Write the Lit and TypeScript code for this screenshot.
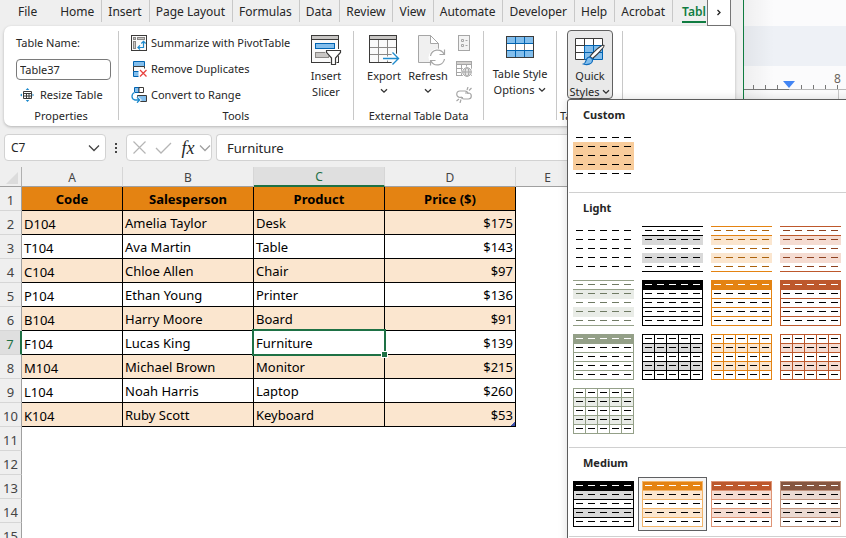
import { LitElement, html, svg, css, nothing } from "lit";
import { customElement, property } from "lit/decorators.js";
import { classMap } from "lit/directives/class-map.js";

interface Style {
  name: string;
  line?: string;
  dash: string;
  head?: string;
  band?: string;
  kind: "plain" | "custom" | "bands" | "rows" | "grid" | "medium";
  selected?: boolean;
}

@customElement("style-thumb")
class StyleThumb extends LitElement {
  @property({ attribute: false }) look!: Style;

  static styles = css`
    :host { display: block; }
    svg { display: block; }
    button { display: block; padding: 0; border: 0; background: none; }
    .selected { outline: 1px solid #5f6062; outline-offset: 3px; box-shadow: 0 0 0 3px #f5f5f5; }
  `;

  render() {
    const s = this.look;
    const steps = [0, 1, 2, 3, 4];
    const edges = [0, 1, 2, 3, 4, 5];
    const bar = (x: number, y: number, w: number, h: number, fill: string) =>
      svg`<rect x=${x} y=${y} width=${w} height=${h} fill=${fill}></rect>`;
    const line = s.line ?? "none";
    const lined = s.kind === "rows" || s.kind === "grid" || s.kind === "medium";
    return html`
      <button class=${classMap({ selected: !!s.selected })} aria-label=${s.name}>
        <svg width="61" height="46" viewBox="0 0 61 46" shape-rendering="crispEdges" aria-hidden="true">
          ${lined ? bar(0, 0, 61, 46, "#fff") : nothing}
          ${s.kind === "custom" ? bar(0, 9, 61, 28, s.band!) : nothing}
          ${s.band && s.kind !== "custom" ? [bar(0, 10, 61, 9, s.band), bar(0, s.kind === "bands" ? 27 : 28, 61, s.kind === "bands" ? 10 : 9, s.band)] : nothing}
          ${s.kind === "bands" ? [0, 9, 45].map((y) => bar(0, y, 61, 1, line)) : nothing}
          ${lined ? edges.map((i) => bar(0, i * 9, 61, 1, line)) : nothing}
          ${lined ? [bar(0, 0, 1, 46, line), bar(60, 0, 1, 46, line)] : nothing}
          ${s.kind === "grid" ? edges.map((i) => bar(i * 12, 0, 1, 46, line)) : nothing}
          ${s.kind === "rows" ? bar(0, 0, 61, 10, s.head!) : nothing}
          ${s.kind === "medium" ? bar(1, 1, 59, 8, s.head!) : nothing}
          ${steps.map((r) => steps.map((c) => bar(3 + c * 12, 4 + r * 9, 7, 1, r === 0 && s.head ? "#fff" : s.dash)))}
        </svg>
      </button>`;
  }
}

const K = "#000000";
const CUSTOM: Style[] = [{ name: "Custom style", kind: "custom", dash: K, band: "#f8cc9b" }];
const LIGHT: Style[] = [
  { name: "None", kind: "plain", dash: K },
  { name: "Light 1", kind: "bands", line: K, dash: K, band: "#d9d9d9" },
  { name: "Light 2", kind: "bands", line: "#e48312", dash: "#ab620d", band: "#fbe6cf" },
  { name: "Light 3", kind: "bands", line: "#bd582c", dash: "#8e4221", band: "#f5dcd2" },
  { name: "Light 6", kind: "bands", line: "#94a088", dash: "#6f7a63", band: "#e9ece7" },
  { name: "Light 8", kind: "rows", line: K, dash: K, head: K },
  { name: "Light 9", kind: "rows", line: "#e48312", dash: K, head: "#e48312" },
  { name: "Light 10", kind: "rows", line: "#bd582c", dash: K, head: "#bd582c" },
  { name: "Light 13", kind: "rows", line: "#94a088", dash: K, head: "#94a088" },
  { name: "Light 15", kind: "grid", line: K, dash: K, band: "#d9d9d9" },
  { name: "Light 16", kind: "grid", line: "#e48312", dash: K, band: "#fbe6cf" },
  { name: "Light 17", kind: "grid", line: "#bd582c", dash: K, band: "#f5dcd2" },
  { name: "Light 20", kind: "grid", line: "#94a088", dash: K, band: "#e9ece7" },
];
const MEDIUM: Style[] = [
  { name: "Medium 1", kind: "medium", line: K, dash: K, head: K, band: "#d9d9d9" },
  { name: "Medium 2", kind: "medium", line: "#f2b469", dash: K, head: "#e48312", band: "#fbe6cf", selected: true },
  { name: "Medium 3", kind: "medium", line: "#de9475", dash: K, head: "#bd582c", band: "#f5dcd2" },
  { name: "Medium 4", kind: "medium", line: "#c0937d", dash: K, head: "#865640", band: "#ebdad2" },
];

const TABS = ["File", "Home", "Insert", "Page Layout", "Formulas", "Data", "Review", "View", "Automate", "Developer", "Help", "Acrobat", "Tabl"];

const ROWS: string[][] = [
  ["D104", "Amelia Taylor", "Desk", "$175"],
  ["T104", "Ava Martin", "Table", "$143"],
  ["C104", "Chloe Allen", "Chair", "$97"],
  ["P104", "Ethan Young", "Printer", "$136"],
  ["B104", "Harry Moore", "Board", "$91"],
  ["F104", "Lucas King", "Furniture", "$139"],
  ["M104", "Michael Brown", "Monitor", "$215"],
  ["L104", "Noah Harris", "Laptop", "$260"],
  ["K104", "Ruby Scott", "Keyboard", "$53"],
];

const chevron = (color = "#333") => html`
  <svg width="8" height="6" viewBox="0 0 8 6" aria-hidden="true"><path d="M1 1.2l3 3 3-3" fill="none" stroke=${color} stroke-width="1.3" /></svg>`;

const wideChevron = (color: string) => html`
  <svg width="12" height="8" viewBox="0 0 12 8" aria-hidden="true"><path d="M1 1.5l5 5 5-5" fill="none" stroke=${color} stroke-width="1.3" /></svg>`;

const icons = {
  pivot: html`<svg width="16" height="16" viewBox="0 0 16 16"><rect x=".5" y=".5" width="15" height="15" fill="#fafafa" stroke="#3b3a39"/><rect x="2.5" y="2.5" width="2" height="2" fill="#c8c6c4" stroke="#8a8886"/><rect x="6.500" y="2.500" width="7" height="2" fill="#c8c6c4" stroke="#8a8886"/><rect x="2.500" y="6.500" width="2" height="7" fill="#c8c6c4" stroke="#8a8886"/><path d="M7 12.500h5.500V6.500M9 10.300L6.900 12.500 9 14.500M10.300 8.500l2.200-2.200 2.200 2.200" fill="none" stroke="#1e8bcd" stroke-width="1.200"/></svg>`,
  duplicates: html`<svg width="16" height="16" viewBox="0 0 16 16"><path d="M2.500.5h11v5h-11z" fill="#83beec" stroke="#0063b1"/><path d="M2.500 5.500h11v5h-11z" fill="#fafafa" stroke="#3b3a39"/><path d="M8 10.500H2.500v5H8" fill="#83beec" stroke="#0063b1"/><path d="M7.500 7.500H16V16H7.500z" fill="#fff"/><path d="M9 9l6.500 6.500M15.500 9L9 15.500" stroke="#e8423f" stroke-width="1.300"/></svg>`,
  convert: html`<svg width="16" height="16" viewBox="0 0 16 16"><path d="M3.500.5h4.500v5H3.500z" fill="#83beec" stroke="#0063b1"/><path d="M8 .5h4.500v5H8z" fill="#fff" stroke="#3b3a39"/><path d="M6.500 8.500h9v6h-9z" fill="#83beec" stroke="#3b3a39"/><path d="M3.500 5.500C.2 7 0 12 4 13h4.500M6 10.300L8.700 13 6 15.700" fill="none" stroke="#fff" stroke-width="3"/><path d="M3.500 5.500C.2 7 0 12 4 13h4.500M6 10.300L8.700 13 6 15.700" fill="none" stroke="#1e8bcd" stroke-width="1.300"/></svg>`,
  resize: html`<svg width="14" height="14" viewBox="0 0 14 14"><path d="M3.500 3.500h8v7h-8zM3.500 5.500h8M3.500 8h8M6.500 5v5.500M9 5v5.500" fill="#fff" stroke="#3b3a39"/><path d="M7.500 0L5.700 2h3.600zM7.500 14l-1.800-2h3.600zM0 7l2-1.600v3.200zM14 7l-1.500-1.600v3.200z" fill="#1e8bcd"/></svg>`,
  slicer: html`<svg width="31" height="31" viewBox="0 0 31 31"><rect x=".5" y=".5" width="27" height="27" fill="#fafafa" stroke="#3b3a39"/><path d="M1 1h26v3H1z" fill="#c8c6c4"/><path d="M.5 4.500h27" stroke="#3b3a39"/><rect x="4.500" y="8.500" width="19" height="5" fill="#83beec" stroke="#0063b1"/><rect x="4.500" y="17.500" width="13" height="5" fill="#c8c6c4" stroke="#8a8886"/><path d="M13.500 14h17v4l-5 5v8h-6v-8l-5-5z" fill="#fff"/><path d="M15.500 15.500h14v2l-5 5.500v6.500h-4V23l-5-5.500z" fill="#fff" stroke="#3b3a39" stroke-width="1.200"/></svg>`,
  exportTable: html`<svg width="31" height="31" viewBox="0 0 31 31"><rect x=".5" y=".5" width="27" height="27" fill="#fafafa" stroke="#3b3a39"/><path d="M1 1h26v3H1z" fill="#c8c6c4"/><path d="M1 12.500h26M1 19.500h26M9.500 5v22M18.500 5v22" stroke="#8a8886"/><path d="M.5 4.500h27" stroke="#3b3a39"/><path d="M14 23.500h15M23.500 17.500l6 6-6 6" fill="none" stroke="#fff" stroke-width="4"/><path d="M14 23.500h15M23.500 17.500l6 6-6 6" fill="none" stroke="#1e8bcd" stroke-width="1.400"/></svg>`,
  refresh: html`<svg width="36" height="31" viewBox="-8 0 36 31"><path d="M.5.500h12l8 8v19H.5z" fill="#f0f0f0" stroke="#a6a6a6"/><path d="M12.500.5v8h8z" fill="#fff" stroke="#a6a6a6"/><circle cx="19.500" cy="22.500" r="9" fill="#fff"/><path d="M12.500 21a7.200 7.200 0 0 1 13.500-2M26.500 24a7.200 7.200 0 0 1-13.500 2M26.500 14.500v5h-5M12.500 30.500v-5h5" fill="none" stroke="#a6a6a6" stroke-width="1.200"/></svg>`,
  properties: html`<svg width="16" height="16" viewBox="0 0 16 16"><rect x="2.500" y=".5" width="11" height="15" fill="#f3f3f3" stroke="#a6a6a6"/><path d="M5.500 4.500h2v2h-2zM5.500 9.500h2v2h-2zM9.500 5.500h2M9.500 10.500h2" fill="none" stroke="#a6a6a6"/></svg>`,
  browser: html`<svg width="16" height="16" viewBox="0 0 16 16"><rect x=".5" y=".5" width="15" height="14" fill="#fff" stroke="#a6a6a6"/><path d="M1 1h14v2.500H1z" fill="#d2d0ce"/><path d="M.5 3.500h15M1 7.500h14M1 11.500h14M5.500 4v10M10.500 4v10" stroke="#a6a6a6"/><circle cx="11" cy="11" r="5.500" fill="#fff"/><circle cx="11" cy="11" r="4.300" fill="#e6e6e6" stroke="#a6a6a6"/><ellipse cx="11" cy="11" rx="1.900" ry="4.300" fill="none" stroke="#a6a6a6"/><path d="M6.700 11h8.600" stroke="#a6a6a6"/></svg>`,
  unlink: html`<svg width="16" height="16" viewBox="0 0 16 16"><path d="M7 10.500H4A3.200 3.200 0 0 1 4 4h5a3.200 3.200 0 0 1 3 3M9 6h3.300a3 3 0 0 1 0 6H8a3 3 0 0 1-3-2.500M11 3l1-3M13 3.500L15.500 1M5 12.500L4 16M3 12l-2.500 2" fill="none" stroke="#a6a6a6" stroke-width="1.200"/></svg>`,
  options: html`<svg width="28" height="23" viewBox="0 0 28 23"><rect x=".5" y=".5" width="27" height="21" fill="#83beec"/><path d="M1 8h26v7H1z" fill="#fff"/><path d="M9.500 1v20M18.500 1v20M1 7.500h26M1 14.500h26" stroke="#0063b1"/><path d="M9.500 8v6M18.500 8v6" stroke="#797775"/><rect x=".5" y=".5" width="27" height="21" fill="none" stroke="#3b3a39"/></svg>`,
  quick: html`<svg width="30" height="28" viewBox="0 0 30 28"><path d="M.5.500h27v21H.5z" fill="#fff"/><path d="M9.500 7.500h18v14h-18z" fill="#83beec"/><path d="M9.500 7.500h18M9.500 14.500h18M9.500 7.500v14M18.500 7.500v14M27.500 7.500v14M9.500 21.500h18" stroke="#0063b1"/><path d="M27.500 7V.500H.5v21h9M1 7.500h8M1 14.500h8M9.500 1v7M18.500 1v6" fill="none" stroke="#3b3a39"/><path d="M29 7.500c1 1-9 11.500-12 13l-2-2c2-3 12-13 14-11z" fill="#fff" stroke="#3b3a39" stroke-width="1.200"/><path d="M8.500 26c3-1 2-5 4.500-6.500 2-1 5 1 4.500 3.500-.6 3-5 4.500-9 3z" fill="#83beec" stroke="#0f6cbd" stroke-width="1.200"/></svg>`,
};

@customElement("app-root")
class AppRoot extends LitElement {
  static styles = css`
    :host {
      display: grid;
      grid-template-columns: minmax(0, 1fr) 102px;
      height: 100vh;
      overflow: hidden;
      position: relative;
      font: 12px/16px "Noto Sans", "Open Sans", sans-serif;
      color: #262626;
      background: #fff;
    }
    * { box-sizing: border-box; }
    svg { display: block; flex: none; }
    button, input { font: inherit; color: inherit; padding: 0; margin: 0; border: 0; background: none; border-radius: 0; outline: 0; }
    .window { display: flex; flex-direction: column; min-width: 0; background: #efefef; border-right: 1px solid #107c41; }

    .tabbar { display: flex; height: 26px; padding-right: 12px; }
    .tabs { display: flex; flex: 1; min-width: 0; overflow: hidden; height: 24px; padding-left: 12px; }
    .tab { flex: none; padding: 2px 7px 0 6px; height: 22px; border-right: 1px solid #c8c8c8; white-space: nowrap; }
    .file { border-color: transparent; margin-right: 9px; }
    .active { padding: 2px 0 0; margin-left: 9px; border: 0; color: #107c41; font-weight: 600; height: 23px; border-bottom: 2px solid #107c41; }
    .more { width: 24px; height: 26px; border: 1px solid #767676; border-top: 0; background: #fff; display: grid; place-items: center; }

    .ribbon { display: flex; height: 100px; margin: 0 8px 0 4px; padding: 4px 0 2px; background: #fff; border-radius: 7px; box-shadow: 0 1px 3px #00000040; font-size: 11px; }
    .group { display: flex; flex-direction: column; padding-right: 1px; background: linear-gradient(#c8c8c8, #c8c8c8) right 1px / 1px 89px no-repeat; }
    .body { display: flex; height: 78px; }
    .label { text-align: center; white-space: nowrap; }
    .props { width: 115px; }
    .tools { width: 235px; }
    .external { width: 130px; }
    .opts { width: 73px; }
    .styles { width: 66px; }
    .styles .label { text-align: left; padding-left: 3px; }
    .stack { display: grid; grid-template-rows: repeat(3, 26px); align-items: center; white-space: nowrap; }
    .props .stack { padding-left: 12px; }
    .tools .stack { padding-left: 12px; width: 181px; }
    .external .stack { padding-left: 6px; }
    .cmd { display: flex; align-items: center; gap: 4px; }
    .resize { padding-left: 4px; gap: 6px; }
    .name { width: 95px; height: 21px; border: 1px solid #7a7a7a; border-radius: 4px; padding: 0 3px; background: #fff; }
    .big { display: flex; flex-direction: column; align-items: center; padding-top: 5px; gap: 2px; text-align: center; white-space: nowrap; }
    .big .cap { display: flex; flex-direction: column; align-items: center; }
    .row { display: flex; align-items: center; gap: 4px; }
    .drop { height: 14px; display: grid; place-items: center; }
    .tools .big { width: 52px; }
    .external .big { width: 44px; }
    .external .body { padding-left: 8px; }
    .opts .big { width: 72px; padding-top: 6px; gap: 7px; }
    .anchor { position: relative; margin-left: 10px; height: 69px; }
    .anchor .big { width: 46px; height: 69px; background: #e9e9e9; border: 1px solid #616161; border-radius: 4px; padding-top: 7px; gap: 2px; }
    .anchor .row { gap: 3px; }

    .gallery {
      position: absolute; z-index: 5; top: 100%; left: 0; width: 300px; padding-bottom: 80px;
      background: #fff; border: 1px solid #5c5c5c; border-radius: 3px 0 0 0; box-shadow: 0 0 10px #00000024;
    }
    .section { margin-left: 1px; padding: 0 4px 13px; border-bottom: 1px solid #d0d0d0; }
    .last { padding-bottom: 9px; }
    h2 { margin: 0 0 3px 10px; font-size: 11px; line-height: 30px; font-weight: 700; }
    .thumbs { display: grid; grid-template-columns: repeat(4, 61px); gap: 8px; }

    .bar { display: flex; margin: 8px 0 6px 4px; height: 27px; }
    .box { display: flex; align-items: center; background: #fff; border: 1px solid #d2d2d2; border-radius: 4px; }
    .ref { width: 102px; padding: 0 5px 0 6px; }
    .ref input { flex: 1; min-width: 0; }
    .dots { width: 20px; display: grid; place-items: center; }
    .fx { width: 86px; padding-left: 6px; gap: 9px; }
    .fx .fn { font: italic 18px/18px "Liberation Serif", serif; width: 14px; }
    .fx .pair { display: flex; align-items: center; gap: 4px; }
    .formula { flex: 1; margin-left: 4px; padding-left: 10px; border-right: 0; border-radius: 4px 0 0 4px; }
    .formula input { flex: 1; min-width: 0; font-size: 13px; }

    .sheet { flex: 1; background: linear-gradient(#efefef, #efefef) 0 0 / 100% 20px no-repeat, linear-gradient(#efefef, #efefef) 0 0 / 21px 100% no-repeat, #fff; }
    table { border-collapse: separate; border-spacing: 0; table-layout: fixed; width: 580px; font-size: 13px; line-height: 20px; }
    .cr { width: 22px; } .ca { width: 101px; } .cb { width: 131px; } .ce { width: 64px; }
    thead th { height: 20px; padding: 2px 0 0; font-weight: 400; font-size: 12px; line-height: 16px; color: #444; border-right: 1px solid #d6d6d6; border-bottom: 1px solid #a0a0a0; }
    thead .corner { border-right-color: #b0b0b0; }
    .corner svg { margin-left: 6px; }
    thead .on { background: #dfdfdf; border-bottom: 2px solid #1e7145; color: #1e7145; padding-top: 1px; }
    tbody tr { height: 24px; }
    .num { padding: 4px 0 0; text-align: center; font-weight: 400; line-height: 19px; color: #444; border-right: 1px solid #a0a0a0; border-bottom: 1px solid #d6d6d6; white-space: nowrap; }
    .num.on { background: #dfdfdf; color: #1e7145; border-right: 2px solid #1e7145; }
    td, .title { padding: 0 2px; height: 24px; color: #000; white-space: nowrap; }
    .title, .cell { border-right: 1px solid #000; border-bottom: 1px solid #000; }
    .title { background: #e48312; font-weight: 700; text-align: center; }
    .odd .cell { background: #fbe6cf; }
    .code { padding-top: 3px; }
    .price { text-align: right; }
    .picked { position: relative; }
    .picked::before { content: ""; position: absolute; inset: -2px; border: 2px solid #1e7145; }
    .picked::after { content: ""; position: absolute; right: -3px; bottom: -3px; width: 5px; height: 5px; background: #1e7145; outline: 1px solid #fff; }
    .end { position: relative; }
    .end::after { content: ""; position: absolute; right: 0; bottom: 0; width: 4px; height: 4px; background: linear-gradient(135deg, transparent 50%, #3f51a8 50%); }

    .other { background: linear-gradient(90deg, #0000000d, transparent 30px), linear-gradient(#fbfbfc 26px, #eef1f6 26px 66px, #fbfbfc 66px); }
    .ruler { display: block; margin-top: 66px; }
    .ruler text { font: 12px "Noto Sans", sans-serif; fill: #6b6560; }
  `;

  render() {
    return html`
      <div class="window">
        <div class="tabbar">
          <div class="tabs" role="tablist">
            ${TABS.map((t) => html`<button role="tab" class=${classMap({ tab: true, file: t === "File", active: t === "Tabl" })}>${t}</button>`)}
          </div>
          <button class="more" aria-label="More tabs"><svg width="6" height="8" viewBox="0 0 6 8"><path d="M1.500 1l2.500 2.500L1.500 6" fill="none" stroke="#222" stroke-width="1.300" /></svg></button>
        </div>
        ${this.ribbon()} ${this.formulaBar()} ${this.sheet()}
      </div>
      ${this.ruler()}
    `;
  }

  private ribbon() {
    return html`
      <div class="ribbon">
        <div class="group props">
          <div class="body"><div class="stack">
            <label for="tname">Table Name:</label>
            <input id="tname" class="name" .value=${"Table37"} />
            <button class="cmd resize">${icons.resize}Resize Table</button>
          </div></div>
          <div class="label">Properties</div>
        </div>
        <div class="group tools">
          <div class="body">
            <div class="stack">
              <button class="cmd">${icons.pivot}Summarize with PivotTable</button>
              <button class="cmd">${icons.duplicates}Remove Duplicates</button>
              <button class="cmd">${icons.convert}Convert to Range</button>
            </div>
            <button class="big">${icons.slicer}<span class="cap"><span>Insert</span><span>Slicer</span></span></button>
          </div>
          <div class="label">Tools</div>
        </div>
        <div class="group external">
          <div class="body">
            <button class="big">${icons.exportTable}<span class="cap"><span>Export</span><span class="drop">${chevron()}</span></span></button>
            <button class="big">${icons.refresh}<span class="cap"><span>Refresh</span><span class="drop">${chevron()}</span></span></button>
            <div class="stack">
              <button aria-label="Properties">${icons.properties}</button>
              <button aria-label="Open in Browser">${icons.browser}</button>
              <button aria-label="Unlink">${icons.unlink}</button>
            </div>
          </div>
          <div class="label">External Table Data</div>
        </div>
        <div class="group opts">
          <div class="body">
            <button class="big">${icons.options}<span class="cap"><span>Table Style</span><span class="row">Options ${chevron()}</span></span></button>
          </div>
        </div>
        <div class="group styles">
          <div class="body">
            <div class="anchor">
              <button class="big" aria-expanded="true">${icons.quick}<span class="cap"><span>Quick</span><span class="row">Styles ${chevron()}</span></span></button>
              ${this.gallery()}
            </div>
          </div>
          <div class="label">Ta</div>
        </div>
      </div>`;
  }

  private gallery() {
    const section = (title: string, list: Style[], last = false) => html`
      <section class=${classMap({ section: true, last })}>
        <h2>${title}</h2>
        <div class="thumbs">${list.map((look) => html`<style-thumb .look=${look}></style-thumb>`)}</div>
      </section>`;
    return html`<div class="gallery">${section("Custom", CUSTOM)}${section("Light", LIGHT)}${section("Medium", MEDIUM, true)}</div>`;
  }

  private formulaBar() {
    return html`
      <div class="bar">
        <div class="box ref"><input aria-label="Name box" .value=${"C7"} /><button aria-label="Open name list">${wideChevron("#444")}</button></div>
        <div class="dots"><svg width="2" height="12" viewBox="0 0 2 12"><path d="M0 1h2v2H0zM0 5h2v2H0zM0 9h2v2H0z" fill="#444" /></svg></div>
        <div class="box fx">
          <button aria-label="Cancel"><svg width="13" height="13" viewBox="0 0 13 13"><path d="M.5.500l12 12M12.500.500l-12 12" stroke="#b5b5b5" stroke-width="1.200" /></svg></button>
          <button aria-label="Enter"><svg width="17" height="12" viewBox="0 0 17 12"><path d="M1 6l5 5L16 1" fill="none" stroke="#b5b5b5" stroke-width="1.300" /></svg></button>
          <span class="pair"><button class="fn" aria-label="Insert function">fx</button>${wideChevron("#a0a0a0")}</span>
        </div>
        <div class="box formula"><input aria-label="Formula" .value=${"Furniture"} /></div>
      </div>`;
  }

  private sheet() {
    return html`
      <div class="sheet">
        <table>
          <colgroup><col class="cr" /><col class="ca" /><col class="cb" /><col class="cb" /><col class="cb" /><col class="ce" /></colgroup>
          <thead><tr>
            <th class="corner"><svg width="12" height="12" viewBox="0 0 12 12"><path d="M12 0v12H0z" fill="#dcdcdc" /></svg></th>
            ${["A", "B", "C", "D", "E"].map((c) => html`<th class=${classMap({ on: c === "C" })}>${c}</th>`)}
          </tr></thead>
          <tbody>
            <tr><th class="num">1</th>${["Code", "Salesperson", "Product", "Price ($)"].map((c) => html`<th class="title">${c}</th>`)}<td></td></tr>
            ${ROWS.map((row, r) => html`
              <tr class=${r % 2 === 0 ? "odd" : "even"}>
                <th class=${classMap({ num: true, on: r === 5 })}>${r + 2}</th>
                ${row.map((v, c) => html`<td class=${classMap({ cell: true, code: c === 0, price: c === 3, picked: r === 5 && c === 2, end: r === 8 && c === 3 })}>${v}</td>`)}
                <td></td>
              </tr>`)}
            ${[11, 12, 13, 14, 15].map((n) => html`<tr><th class="num">${n}</th><td colspan="5"></td></tr>`)}
          </tbody>
        </table>
      </div>`;
  }

  private ruler() {
    return html`
      <div class="other">
        <svg class="ruler" width="102" height="34" viewBox="0 0 102 34" aria-hidden="true">
          ${[9, 21, 33, 57, 69, 81, 93].map((x) => svg`<rect x=${x} y="19" width="1" height="4" fill="#777"></rect>`)}
          <rect x="0" y="23" width="45" height="1" fill="#777" />
          <rect x="45" y="23" width="57" height="1" fill="#b8b8b8" />
          <rect x="94" y="24" width="1" height="10" fill="#c8c8c8" />
          <path d="M39 15h12l-6 7z" fill="#4285f4" />
          <text x="90" y="17">8</text>
        </svg>
      </div>`;
  }
}
